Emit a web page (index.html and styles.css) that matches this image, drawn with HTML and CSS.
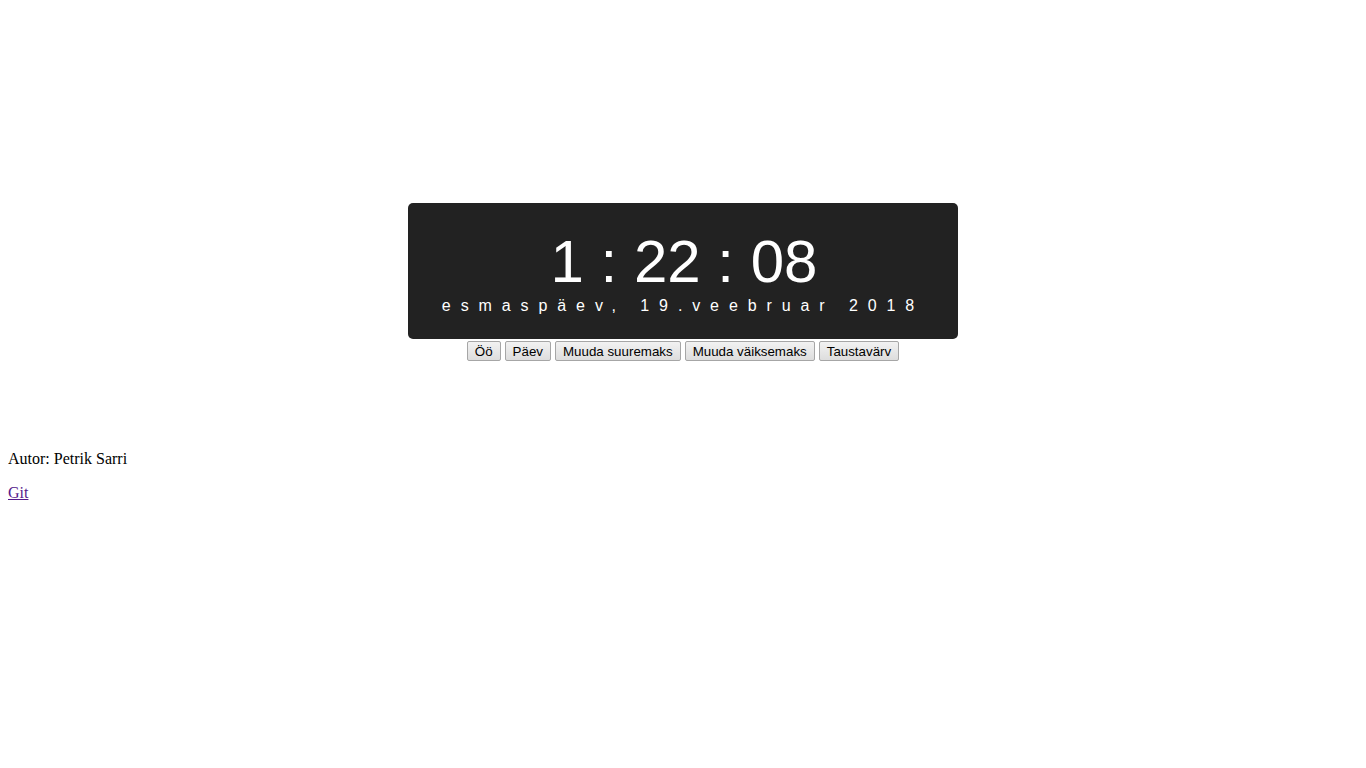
FILE: index.html
```html
<!DOCTYPE html>
<html lang="et">
<head>
<meta charset="utf-8">
<title>Kell</title>
<link rel="stylesheet" href="styles.css">
</head>
<body>
<main class="stage">
  <div class="clock">
    <div class="time">1 : 22 : 08</div>
    <div class="date">esmaspäev, 19.veebruar 2018</div>
  </div>
  <div class="controls">
    <button class="btn">Öö</button>
    <button class="btn">Päev</button>
    <button class="btn">Muuda suuremaks</button>
    <button class="btn">Muuda väiksemaks</button>
    <button class="btn">Taustavärv</button>
  </div>
</main>
<p class="author">Autor: Petrik Sarri</p>
<p class="git"><a class="git-link" href="#">Git</a></p>
</body>
</html>
```

FILE: styles.css
```css
html, body {
  background: #ffffff;
}
body {
  margin: 8px;
  font-family: "Liberation Serif", "Times New Roman", serif;
  font-size: 16px;
  color: #000;
}
.stage {
  display: block;
  box-sizing: border-box;
  height: 426px;
  padding-top: 195px;
}
.clock {
  width: 550px;
  margin: 0 auto;
  box-sizing: border-box;
  padding: 25px 0 24px;
  background: #222222;
  border-radius: 5px;
  color: #ffffff;
  font-family: "Liberation Sans", Arial, sans-serif;
  text-align: center;
}
.time {
  font-size: 60px;
  line-height: 67px;
  padding-left: 2px;
}
.date {
  font-size: 16px;
  line-height: 18px;
  letter-spacing: 9.9px;
  margin-top: 2px;
}
.controls {
  text-align: center;
  margin-top: 2px;
  font-size: 0;
}
.btn {
  font-family: "Liberation Sans", Arial, sans-serif;
  font-size: 13.333px;
  line-height: 15px;
  color: #000;
  background: linear-gradient(#f2f2f2, #dddddd);
  border: 1px solid #a6a6a6;
  border-radius: 2px;
  padding: 2px 7px;
  margin: 0 2px;
  height: 20px;
  vertical-align: top;
}
.author {
  margin: 16px 0;
}
.git {
  margin: 16px 0;
}
.git-link {
  color: #551a8b;
}
```
